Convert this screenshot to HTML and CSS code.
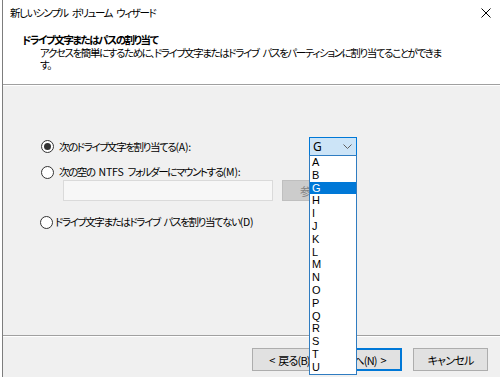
FILE: index.html
```html
<!DOCTYPE html>
<html lang="ja">
<head>
<meta charset="utf-8">
<title>新しいシンプル ボリューム ウィザード</title>
<link rel="stylesheet" href="styles.css">
</head>
<body>
<div class="screen">
  <div class="edge"></div>
  <div class="dialog">
    <header class="head">
      <div class="titlebar">
        <span class="title">新しいシンプル ボリューム ウィザード</span>
        <svg class="close" width="10" height="10" viewBox="0 0 10 10"><path d="M0.5 0.5 L9.5 9.5 M9.5 0.5 L0.5 9.5" stroke="#000" stroke-width="1" fill="none"/></svg>
      </div>
      <div class="heading">ドライブ文字またはパスの割り当て</div>
      <div class="desc">アクセスを簡単にするために、ドライブ文字またはドライブ パスをパーティションに割り当てることができま<br>す。</div>
    </header>
    <main class="body">
      <div class="options">
        <div class="row row-first">
          <label class="radio"><span class="circle checked"></span><span class="label-text">次のドライブ文字を割り当てる<span class="key">(A):</span></span></label>
          <div class="combo">
            <span class="combo-value">G</span>
            <svg class="chev" width="9" height="5" viewBox="0 0 9 5"><path d="M0.5 0.5 L4.5 4.5 L8.5 0.5" stroke="#606060" stroke-width="1" fill="none"/></svg>
            <ul class="list">
              <li>A</li><li>B</li><li class="sel">G</li><li>H</li><li>I</li><li>J</li><li>K</li><li>L</li><li>M</li><li>N</li><li>O</li><li>P</li><li>Q</li><li>R</li><li>S</li><li>T</li><li>U</li>
            </ul>
          </div>
        </div>
        <div class="row row-second">
          <label class="radio"><span class="circle"></span><span class="label-text">次の空の <span class="key">NTFS</span> フォルダーにマウントする<span class="key">(M):</span></span></label>
        </div>
        <div class="pathrow">
          <div class="field"></div>
          <button class="btn btn-disabled">参照(R)...</button>
        </div>
        <div class="row row-third">
          <label class="radio radio-tight"><span class="circle"></span><span class="label-text">ドライブ文字またはドライブ パスを割り当てない<span class="key">(D)</span></span></label>
        </div>
      </div>
    </main>
    <footer class="foot">
      <div class="pair">
        <button class="btn">&lt; 戻る(B)</button>
        <button class="btn btn-default">次へ(N) &gt;</button>
      </div>
      <button class="btn btn-cancel">キャンセル</button>
    </footer>
  </div>
</div>
</body>
</html>
```

FILE: styles.css
```css
html, body {
  margin: 0;
  padding: 0;
  width: 500px;
  height: 377px;
  overflow: hidden;
  background: #ffffff;
}

.screen {
  display: flex;
  width: 500px;
  height: 377px;
  overflow: hidden;
  font-family: "Noto Sans CJK JP", "Noto Sans", sans-serif;
  font-size: 10.5px;
  letter-spacing: -1.4px;
  word-spacing: 3px;
  font-feature-settings: "palt";
  color: #000;
}

.edge {
  width: 2px;
  flex: none;
  background: #ffffff;
}

.dialog {
  flex: 1;
  display: flex;
  flex-direction: column;
  border-left: 1px solid #7d7d7d;
  min-width: 0;
}

.head {
  flex: none;
  background: #ffffff;
  border-bottom: 1px solid #a0a0a0;
  box-sizing: border-box;
  height: 85px;
}

.titlebar {
  display: flex;
  align-items: center;
  justify-content: space-between;
  height: 16px;
  padding: 5px 9px 0 7px;
  line-height: 16px;
}

.close {
  display: block;
}

.heading {
  margin-top: 13px;
  padding-left: 19px;
  font-weight: bold;
  line-height: 12px;
}

.desc {
  padding-left: 37px;
  line-height: 12.5px;
  margin-top: 0.5px;
  white-space: nowrap;
}

.body {
  height: 251px;
  flex: none;
  box-sizing: border-box;
  background: #f0f0f0;
  border-top: 1px solid #ffffff;
  border-bottom: 1px solid #a0a0a0;
  padding-top: 51px;
}

.options {
  margin-left: 38px;
  width: 316px;
  display: flex;
  flex-direction: column;
}

.row {
  display: flex;
  align-items: center;
  justify-content: space-between;
}

.row-first {
  height: 19px;
}

.row-second {
  height: 14px;
  margin-top: 9px;
}

.row-third {
  height: 16px;
  margin-top: 13px;
}

.radio {
  display: flex;
  align-items: center;
  gap: 5px;
  line-height: 14px;
  white-space: nowrap;
}

.key {
  letter-spacing: -0.2px;
}

.radio-tight {
  gap: 2px;
  margin-left: -1px;
}

.circle {
  width: 11px;
  height: 11px;
  border: 1px solid #333333;
  border-radius: 50%;
  background: #ffffff;
  display: flex;
  align-items: center;
  justify-content: center;
  flex: none;
}

.circle.checked::after {
  content: "";
  width: 7px;
  height: 7px;
  border-radius: 50%;
  background: #333333;
}

.combo {
  position: relative;
  width: 48px;
  height: 19px;
  box-sizing: border-box;
  border: 1px solid #0078d7;
  background: #cce4f7;
  display: flex;
  align-items: center;
  justify-content: space-between;
  padding: 0 4px 0 3px;
  font-family: "Noto Sans", "Noto Sans CJK JP", sans-serif;
  font-size: 12px;
  letter-spacing: 0;
}

.combo-value {
  line-height: 16px;
}

.chev {
  display: block;
}

.list {
  position: absolute;
  top: 17px;
  left: -1px;
  width: 48px;
  box-sizing: border-box;
  margin: 0;
  padding: 0;
  list-style: none;
  background: #ffffff;
  border: 1px solid #2f7cc1;
  z-index: 5;
}

.list li {
  height: 12.8px;
  line-height: 12.8px;
  padding-left: 2px;
  font-family: "Liberation Sans", "Noto Sans", sans-serif;
  font-size: 11px;
}

.list li.sel {
  background: #0078d7;
  color: #ffffff;
}

.pathrow {
  display: flex;
  gap: 9px;
  margin-left: 22px;
  margin-top: 1px;
  height: 21px;
}

.field {
  width: 210px;
  height: 21px;
  box-sizing: border-box;
  border: 1px solid #dadada;
  background: #f7f7f7;
}

.btn {
  font-family: "Noto Sans CJK JP", "Noto Sans", sans-serif;
  font-feature-settings: "palt";
  font-size: 11px;
  letter-spacing: -0.8px;
  word-spacing: 2px;
  width: 75px;
  height: 23px;
  box-sizing: border-box;
  border: 1px solid #adadad;
  background: #e1e1e1;
  color: #000;
  padding: 0;
  margin: 0;
  line-height: 20px;
}

.pathrow .btn {
  height: 21px;
  line-height: 18px;
}

.btn-disabled {
  background: #cccccc;
  border-color: #bfbfbf;
  color: #838383;
}

.btn-default {
  border-color: #0078d7;
  box-shadow: inset 0 0 0 1px #0078d7;
}

.foot {
  flex: 1;
  background: #f0f0f0;
  border-top: 1px solid #ffffff;
  display: flex;
  justify-content: flex-end;
  align-items: flex-start;
  gap: 11px;
  padding: 11px 12px 0 0;
}

.pair {
  display: flex;
}
```
